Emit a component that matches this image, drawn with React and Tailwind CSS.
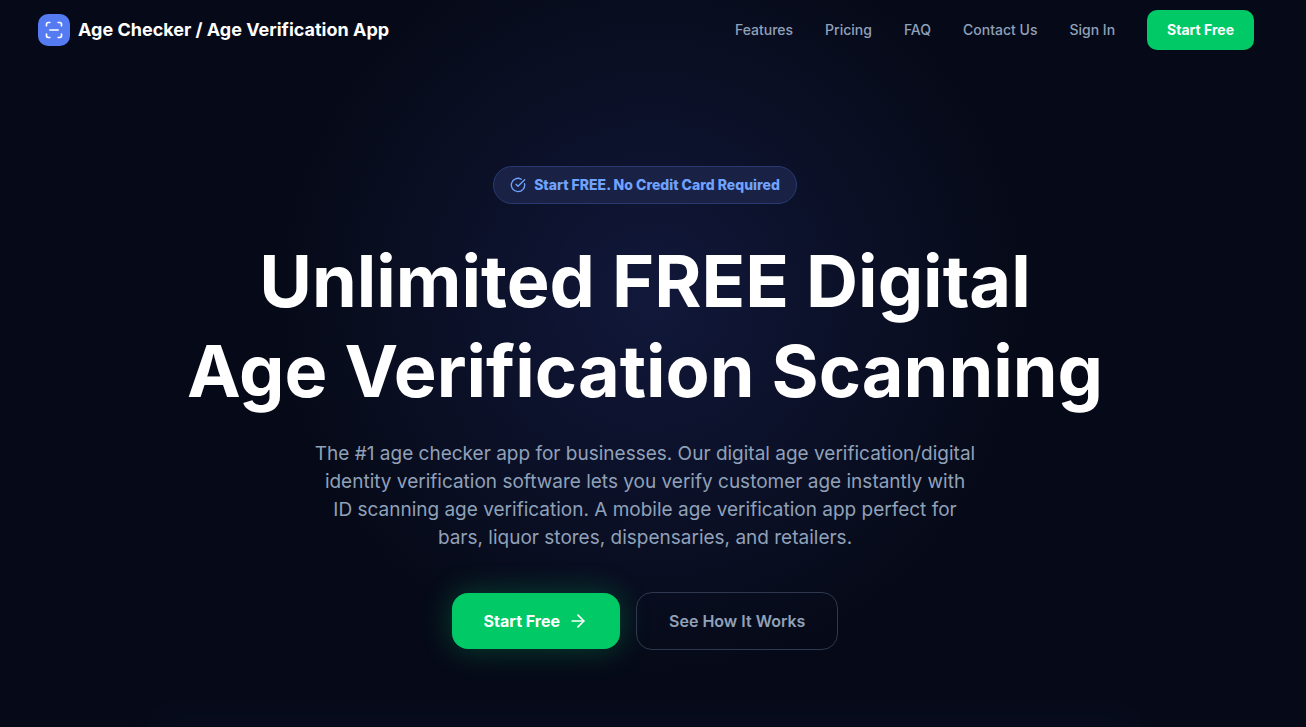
import { ScanLine, CircleCheckBig, ArrowRight } from 'lucide-react';

const NAV_LINKS = [
  { label: 'Features', href: '#features' },
  { label: 'Pricing', href: '#pricing' },
  { label: 'FAQ', href: '#faq' },
  { label: 'Contact Us', href: '#contact' },
  { label: 'Sign In', href: '#sign-in' },
];

function Navbar() {
  return (
    <header className="flex h-15 items-center justify-between pl-[38px] pr-[52px]">
      <a href="#top" className="flex items-center gap-2">
        <span className="flex size-8 items-center justify-center rounded-[10px] bg-[#557bf3]">
          <ScanLine size={20} className="text-white" />
        </span>
        <span className="whitespace-nowrap text-lg font-bold text-white">
          Age Checker / Age Verification App
        </span>
      </a>
      <nav className="flex items-center gap-8">
        {NAV_LINKS.map((link) => (
          <a key={link.label} href={link.href} className="text-sm font-medium text-[#90a1b9] hover:text-white">
            {link.label}
          </a>
        ))}
        <button className="h-10 rounded-[10px] bg-[#00c966] px-5 text-sm font-bold text-white">
          Start Free
        </button>
      </nav>
    </header>
  );
}

function Hero() {
  return (
    <main className="flex flex-col items-center pr-4 pt-[106px] text-center">
      <div className="flex h-[38px] items-center gap-2 rounded-full border border-[#2a3a70] bg-[#192145] px-4 text-sm font-extrabold text-[#6fa3ff]">
        <CircleCheckBig size={16} />
        Start FREE. No Credit Card Required
      </div>
      <h1 className="mt-8 text-[72px] font-bold leading-[90px] text-white">
        Unlimited FREE Digital
        <br />
        Age Verification Scanning
      </h1>
      <p className="mt-6 text-[19px] leading-7 text-[#90a1b9]">
        The #1 age checker app for businesses. Our digital age verification/digital
        <br />
        identity verification software lets you verify customer age instantly with
        <br />
        ID scanning age verification. A mobile age verification app perfect for
        <br />
        bars, liquor stores, dispensaries, and retailers.
      </p>
      <div className="mt-10 flex items-center gap-4">
        <button className="flex h-14 items-center gap-2 rounded-2xl bg-[#00c966] px-8 font-bold text-white shadow-[0_0_30px_rgba(0,201,102,0.3)]">
          Start Free
          <ArrowRight size={20} />
        </button>
        <button className="h-[58px] rounded-2xl border border-[#2f384e] px-8 font-semibold text-[#90a1b9]">
          See How It Works
        </button>
      </div>
    </main>
  );
}

export default function App() {
  return (
    <div className="flex min-h-screen flex-col overflow-hidden bg-[#060a18] bg-[radial-gradient(circle_at_50%_300px,#11183a_0%,#060a18_370px)] font-['Inter',sans-serif]">
      <Navbar />
      <Hero />
      {/* Soft glow rising from the next section */}
      <div className="mt-auto mr-4 px-40">
        <div className="h-px shadow-[0_0_40px_8px_rgba(85,100,243,0.08)]" />
      </div>
    </div>
  );
}
